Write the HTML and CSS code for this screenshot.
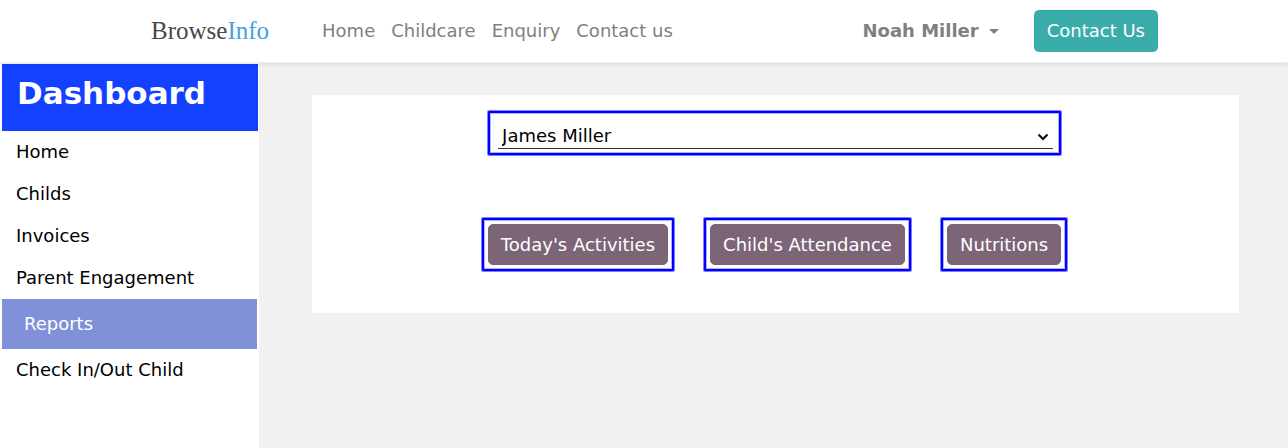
FILE: index.html
```html
<!DOCTYPE html>
<html lang="en">
<head>
<meta charset="utf-8">
<meta name="viewport" content="width=device-width, initial-scale=1">
<title>Dashboard - Reports</title>
<link rel="stylesheet" href="styles.css">
</head>
<body>
<header class="topbar">
  <a class="logo" href="#">Browse<span class="logo-accent">Info</span></a>
  <nav class="topnav">
    <a href="#">Home</a>
    <a href="#">Childcare</a>
    <a href="#">Enquiry</a>
    <a href="#">Contact us</a>
  </nav>
  <button class="user-menu" type="button">Noah Miller
    <svg class="caret" width="10" height="5" viewBox="0 0 10 5" aria-hidden="true"><path d="M0 0h10L5 5z"/></svg>
  </button>
  <a class="contact" href="#">Contact Us</a>
</header>
<div class="layout">
  <aside class="sidebar">
    <h1 class="sidebar-title">Dashboard</h1>
    <nav class="sidenav">
      <a href="#">Home</a>
      <a href="#">Childs</a>
      <a href="#">Invoices</a>
      <a href="#">Parent Engagement</a>
      <a class="active" href="#" aria-current="page">Reports</a>
      <a href="#">Check In/Out Child</a>
    </nav>
  </aside>
  <main class="content">
    <section class="panel">
      <div class="frame child-frame">
        <div class="child-field">
          <select class="child-select" aria-label="Child">
            <option>James Miller</option>
          </select>
          <svg class="chevron" width="12" height="8" viewBox="0 0 12 8" aria-hidden="true"><path d="M1.5 1.5L6 6l4.500-4.500"/></svg>
        </div>
      </div>
      <div class="actions">
        <div class="frame"><button class="action" type="button">Today's Activities</button></div>
        <div class="frame"><button class="action" type="button">Child's Attendance</button></div>
        <div class="frame"><button class="action" type="button">Nutritions</button></div>
      </div>
    </section>
  </main>
</div>
</body>
</html>
```
FILE: styles.css
```css
* { box-sizing: border-box; }

body {
  margin: 0;
  min-height: 100vh;
  display: flex;
  flex-direction: column;
  background: #f1f1f1;
  color: #000;
  font: 18px/26px "DejaVu Sans", sans-serif;
}

a { color: inherit; text-decoration: none; }
button, select { font: inherit; }

.topbar {
  display: flex;
  align-items: center;
  padding: 10px 130px 10px 151px;
  background: #fff;
  border-bottom: 1px solid #efefef;
  box-shadow: 0 2px 4px rgba(0, 0, 0, 0.07);
  color: #808080;
  z-index: 1;
}

.logo {
  color: #484848;
  font: 25px/30px "Liberation Serif", serif;
}
.logo-accent { color: #45a1e3; }

.topnav {
  display: flex;
  gap: 16px;
  margin-left: 53px;
}

.user-menu {
  display: flex;
  align-items: center;
  gap: 10px;
  margin-left: auto;
  padding: 0;
  border: 0;
  background: none;
  color: inherit;
  font-weight: bold;
}
.caret { fill: #808080; }

.contact {
  margin-left: 35px;
  padding: 8px 13px;
  border-radius: 5px;
  background: #3aadaa;
  color: #fff;
}

.layout { flex: 1; display: flex; }

.sidebar {
  flex: none;
  width: 259px;
  padding: 1px 1px 0 2px;
  background: #fff;
}

.sidebar-title {
  margin: 0;
  padding: 10px 15px 19px;
  background: #1341ff;
  color: #fff;
  font-size: 31px;
  line-height: 38px;
}

.sidenav { display: flex; flex-direction: column; }
.sidenav a { padding: 8px 14px; }
.sidenav .active {
  margin-right: 1px;
  padding: 12px 22px;
  background: #8091da;
  color: #fff;
}

.content { flex: 1; padding: 32px 49px 32px 53px; }

.panel {
  display: flex;
  flex-direction: column;
  align-items: center;
  gap: 63px;
  padding: 16px 17px 42px 15px;
  background: #fff;
}

.frame {
  padding: 4px;
  border: 2px solid #00f;
  border-radius: 1px;
  box-shadow: 0 0 0 1px rgba(0, 0, 255, 0.5), inset 0 0 0 1px rgba(0, 0, 255, 0.3);
}

.child-frame {
  width: 64%;
  max-width: 573px;
  padding: 8px 6px 4px 8px;
}

.child-field { position: relative; }

.child-select {
  display: block;
  width: 100%;
  height: 28px;
  padding: 2px 24px 0 4px;
  border: 0;
  border-bottom: 1px solid #333;
  border-radius: 0;
  background: none;
  color: #000;
  appearance: none;
}

.chevron {
  position: absolute;
  right: 4px;
  top: 12px;
  fill: none;
  stroke: #000;
  stroke-width: 2;
  pointer-events: none;
}

.actions { display: flex; flex-wrap: wrap; justify-content: center; gap: 30px; }

.action {
  display: block;
  padding: 7px 12px;
  border: 1px solid #7c6576;
  border-radius: 5px;
  background: #7c6576;
  color: #fff;
  line-height: 25px;
}
```
